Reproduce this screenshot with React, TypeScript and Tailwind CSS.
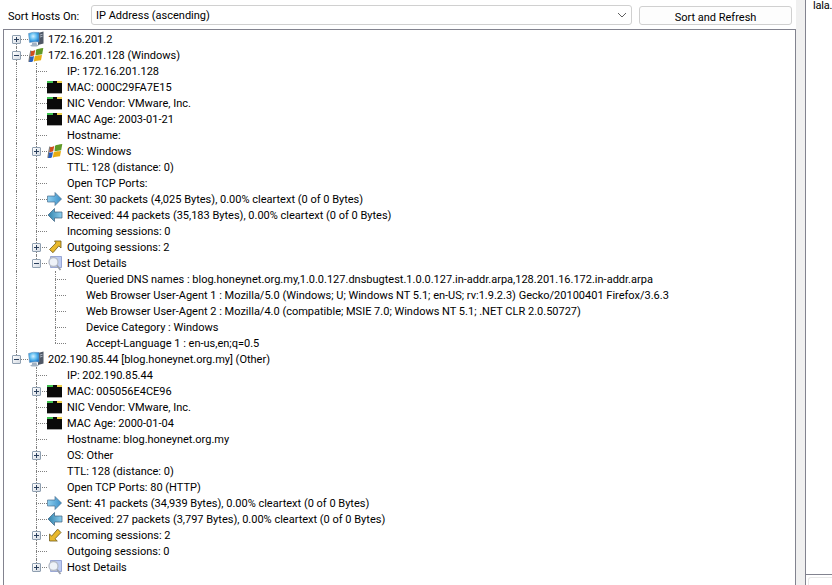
import type { ReactNode } from "react";

type IconName = "monitor" | "windows" | "nic" | "sent" | "received" | "outgoing" | "incoming" | "details";

interface TreeNode {
  label: string;
  icon?: IconName;
  open?: boolean;
  hasChildren?: boolean;
  children?: TreeNode[];
}

const hosts: TreeNode[] = [
  { label: "172.16.201.2", icon: "monitor", hasChildren: true },
  {
    label: "172.16.201.128 (Windows)",
    icon: "windows",
    open: true,
    hasChildren: true,
    children: [
      { label: "IP: 172.16.201.128" },
      { label: "MAC: 000C29FA7E15", icon: "nic" },
      { label: "NIC Vendor: VMware, Inc.", icon: "nic" },
      { label: "MAC Age: 2003-01-21", icon: "nic" },
      { label: "Hostname:" },
      { label: "OS: Windows", icon: "windows", hasChildren: true },
      { label: "TTL: 128 (distance: 0)" },
      { label: "Open TCP Ports:" },
      { label: "Sent: 30 packets (4,025 Bytes), 0.00% cleartext (0 of 0 Bytes)", icon: "sent" },
      { label: "Received: 44 packets (35,183 Bytes), 0.00% cleartext (0 of 0 Bytes)", icon: "received" },
      { label: "Incoming sessions: 0" },
      { label: "Outgoing sessions: 2", icon: "outgoing", hasChildren: true },
      {
        label: "Host Details",
        icon: "details",
        open: true,
        hasChildren: true,
        children: [
          { label: "Queried DNS names : blog.honeynet.org.my,1.0.0.127.dnsbugtest.1.0.0.127.in-addr.arpa,128.201.16.172.in-addr.arpa" },
          { label: "Web Browser User-Agent 1 : Mozilla/5.0 (Windows; U; Windows NT 5.1; en-US; rv:1.9.2.3) Gecko/20100401 Firefox/3.6.3" },
          { label: "Web Browser User-Agent 2 : Mozilla/4.0 (compatible; MSIE 7.0; Windows NT 5.1; .NET CLR 2.0.50727)" },
          { label: "Device Category : Windows" },
          { label: "Accept-Language 1 : en-us,en;q=0.5" },
        ],
      },
    ],
  },
  {
    label: "202.190.85.44 [blog.honeynet.org.my] (Other)",
    icon: "monitor",
    open: true,
    hasChildren: true,
    children: [
      { label: "IP: 202.190.85.44" },
      { label: "MAC: 005056E4CE96", icon: "nic", hasChildren: true },
      { label: "NIC Vendor: VMware, Inc.", icon: "nic" },
      { label: "MAC Age: 2000-01-04", icon: "nic" },
      { label: "Hostname: blog.honeynet.org.my" },
      { label: "OS: Other", hasChildren: true },
      { label: "TTL: 128 (distance: 0)" },
      { label: "Open TCP Ports: 80 (HTTP)", hasChildren: true },
      { label: "Sent: 41 packets (34,939 Bytes), 0.00% cleartext (0 of 0 Bytes)", icon: "sent" },
      { label: "Received: 27 packets (3,797 Bytes), 0.00% cleartext (0 of 0 Bytes)", icon: "received" },
      { label: "Incoming sessions: 2", icon: "incoming", hasChildren: true },
      { label: "Outgoing sessions: 0" },
      { label: "Host Details", icon: "details", hasChildren: true },
    ],
  },
];

function NodeIcon({ name }: { name: IconName }) {
  switch (name) {
    case "monitor":
      return (
        <svg width="16" height="16" viewBox="0 0 16 16">
          <defs>
            <radialGradient id="scr" cx=".45" cy=".4" r=".65">
              <stop offset="0" stopColor="#d4f0ff" />
              <stop offset=".5" stopColor="#5dbcf0" />
              <stop offset="1" stopColor="#1672c8" />
            </radialGradient>
          </defs>
          <path d="M10 2l5.500-1.500v12L10 14z" fill="#4f5866" />
          <path d="M12 3.500l2.500-.7v1l-2.500.7zM12 5.500l2.500-.7v1l-2.500.7z" fill="#aab4c0" />
          <path d="M.5 2.500Q5 .5 11 1.500V11Q6 10.500 1.500 11.500z" fill="url(#scr)" stroke="#6f93b5" strokeWidth=".5" />
          <path d="M4 11.500h4.500l.5 2 2 1.200-2.500.8H4l-2-.8 2-1.200z" fill="#a3b3c4" />
        </svg>
      );
    case "windows":
      return (
        <svg width="16" height="16" viewBox="0 0 16 16">
          <path d="M8 2.800C10 1.500 12 1.600 15.300 1l-1.100 6.300c-2.400.3-4.200.3-6.700 1.300z" fill="#5f9a26" />
          <path d="M7.200 3C5.700 3.900 4.700 4.200 3.200 4L2.200 8.900c1.700.2 3 0 4-.6z" fill="#cf4d1d" />
          <path d="M6 8.900c-1.200.6-2.500.7-4 .5L1 15c1.700.2 2.900 0 4-.8z" fill="#2a5fbe" />
          <path d="M6.700 9.300 5.800 14.800c2.200-1.300 4.500-1 7.200-1.500l1-5.400c-2.700.3-5 .2-7.300 1.400z" fill="#e8ad12" />
          <path d="M2.800 3.500 1.700 9 .8 14.800" stroke="#3a3a3a" strokeWidth=".7" fill="none" />
        </svg>
      );
    case "nic":
      return (
        <svg width="16" height="16" viewBox="0 0 16 16">
          <path d="M0 2h15v12H0z" fill="#0a0a0a" />
          <path d="M0 2h6v2H0z" fill="#3fc24f" />
          <path d="M10 2h5v2h-5z" fill="#efd04a" />
          <path d="M0 14h15v1H0z" fill="#a8a8a8" />
        </svg>
      );
    case "sent":
      return (
        <svg width="16" height="16" viewBox="0 0 16 16">
          <defs>
            <linearGradient id="snt" x1="0" y1="0" x2="1" y2="0">
              <stop offset="0" stopColor="#8fd0f0" />
              <stop offset="1" stopColor="#3a8fc8" />
            </linearGradient>
          </defs>
          <path d="M.5 5h7.500V1.500L14.500 8 8 14.500V11H.5z" fill="url(#snt)" stroke="#4c6f8c" strokeWidth=".7" />
        </svg>
      );
    case "received":
      return (
        <svg width="16" height="16" viewBox="0 0 16 16">
          <defs>
            <linearGradient id="rcv" x1="0" y1="0" x2="1" y2="0">
              <stop offset="0" stopColor="#2f7fa8" />
              <stop offset="1" stopColor="#8fd0f0" />
            </linearGradient>
          </defs>
          <path d="M15 5H7.500V1.500L1 8l6.500 6.500V11H15z" fill="url(#rcv)" stroke="#3c5f7c" strokeWidth=".7" />
        </svg>
      );
    case "outgoing":
      return (
        <svg width="16" height="16" viewBox="0 0 16 16">
          <path d="M7.500 2h6.500v7l-2.200-2.100-5.800 6.800L2.500 10.500l6.500-6.600z" fill="#e9b92c" stroke="#6e5a1a" strokeWidth=".8" />
        </svg>
      );
    case "incoming":
      return (
        <svg width="16" height="16" viewBox="0 0 16 16">
          <path d="M2.500 7l2.200 2.100 6-7L14 5.500 8 11.800l2.300 2.200H2.500z" fill="#e9b92c" stroke="#6e5a1a" strokeWidth=".8" />
        </svg>
      );
    case "details":
      return (
        <svg width="16" height="16" viewBox="0 0 16 16">
          <path d="M3.500 1.500h11v11h-11z" fill="#bccbf2" stroke="#8796cc" strokeWidth=".8" />
          <circle cx="6.500" cy="7" r="4.500" fill="#eef2f8" stroke="#b4bac6" strokeWidth="1.300" />
          <path d="M10 10.500l3.500 4.500" stroke="#9aa0aa" strokeWidth="1.800" />
        </svg>
      );
  }
}

// +/- box on top of the dotted line
function Expander({ open }: { open?: boolean }) {
  return (
    <span className="absolute left-[-4px] top-[4px] flex h-[9px] w-[9px] items-center justify-center rounded-[1px] border border-[#8f9fb0] bg-gradient-to-br from-white to-[#d5dbe3]">
      <span className="relative block h-px w-[5px] bg-[#2a3f5c]">
        {!open && <span className="absolute left-[2px] top-[-2px] block h-[5px] w-px bg-[#2a3f5c]" />}
      </span>
    </span>
  );
}

function Guide({ on, wide }: { on: boolean; wide: boolean }) {
  const width = wide ? "w-5" : "w-[19px]";
  return <div className={on ? `h-4 ${width} shrink-0 border-l border-dotted border-[#808080]` : `h-4 ${width} shrink-0`} />;
}

function Row({ node, guides, last, first }: { node: TreeNode; guides: boolean[]; last: boolean; first?: boolean }) {
  const childGuides = [...guides, !last];
  return (
    <>
      <div className="flex h-4 items-stretch whitespace-nowrap">
        {guides.map((on, i) => (
          <Guide key={i} on={on} wide={i === 0} />
        ))}
        <div className={guides.length === 0 ? "relative flex w-3 shrink-0 flex-col" : "relative flex w-[11px] shrink-0 flex-col"}>
          <div className={first ? "h-2" : "h-2 border-l border-dotted border-[#808080]"} />
          <div className={last ? "h-2 border-t border-dotted border-[#808080]" : "h-2 border-t border-l border-dotted border-[#808080]"} />
          {node.hasChildren && <Expander open={node.open} />}
        </div>
        <div className="flex w-4 shrink-0 items-center justify-center">{node.icon && <NodeIcon name={node.icon} />}</div>
        <div className="pl-1 pt-px leading-4">{node.label}</div>
      </div>
      {node.children?.map((child, i) => (
        <Row key={i} node={child} guides={childGuides} last={i === node.children!.length - 1} />
      ))}
    </>
  );
}

function Toolbar(): ReactNode {
  return (
    <div className="flex h-[29px] shrink-0 items-start pl-[5px] pr-1 pt-[5px]">
      <span className="w-[83px] pt-px leading-[21px]">Sort Hosts On:</span>
      <div className="flex h-5 w-[541px] items-center justify-between rounded-[3px] border border-[#d0d0d0] pl-[4px] pr-[3px]">
        <span className="pt-[3px]">IP Address (ascending)</span>
        <svg width="10" height="6" viewBox="0 0 10 6" fill="none" className="mr-px">
          <path d="M1 1l4 4 4-4" stroke="#606060" />
        </svg>
      </div>
      <button className="ml-[7px] mt-px h-[19px] w-[153px] rounded-[3px] border border-[#d0d0d0] bg-[#fdfdfd] pt-[3px] leading-4">Sort and Refresh</button>
    </div>
  );
}

export default function App() {
  return (
    <div className="flex h-[585px] w-[832px] overflow-hidden bg-white font-['Roboto',sans-serif] text-[11px] text-black">
      <div className="flex w-[796px] shrink-0 flex-col pl-[3px]">
        <Toolbar />
        <div className="flex-1 overflow-hidden border border-b-0 border-[#82838f] pl-3 pt-px">
          {hosts.map((host, i) => (
            <Row key={i} node={host} guides={[]} last={i === hosts.length - 1} first={i === 0} />
          ))}
        </div>
      </div>
      <div className="w-[9px] shrink-0 bg-[#f0f0f0]" />
      <div className="flex flex-1 flex-col border-l border-[#82838f]">
        <div className="flex-1 pl-[7px] leading-[11px] tracking-[-0.2px]">lala.</div>
        <div className="h-[11px] border-t border-[#82838f] pl-[2px] pt-[2px]">
          <div className="h-full rounded-tl-[3px] border-l border-t border-[#e8e8e8]" />
        </div>
      </div>
    </div>
  );
}
